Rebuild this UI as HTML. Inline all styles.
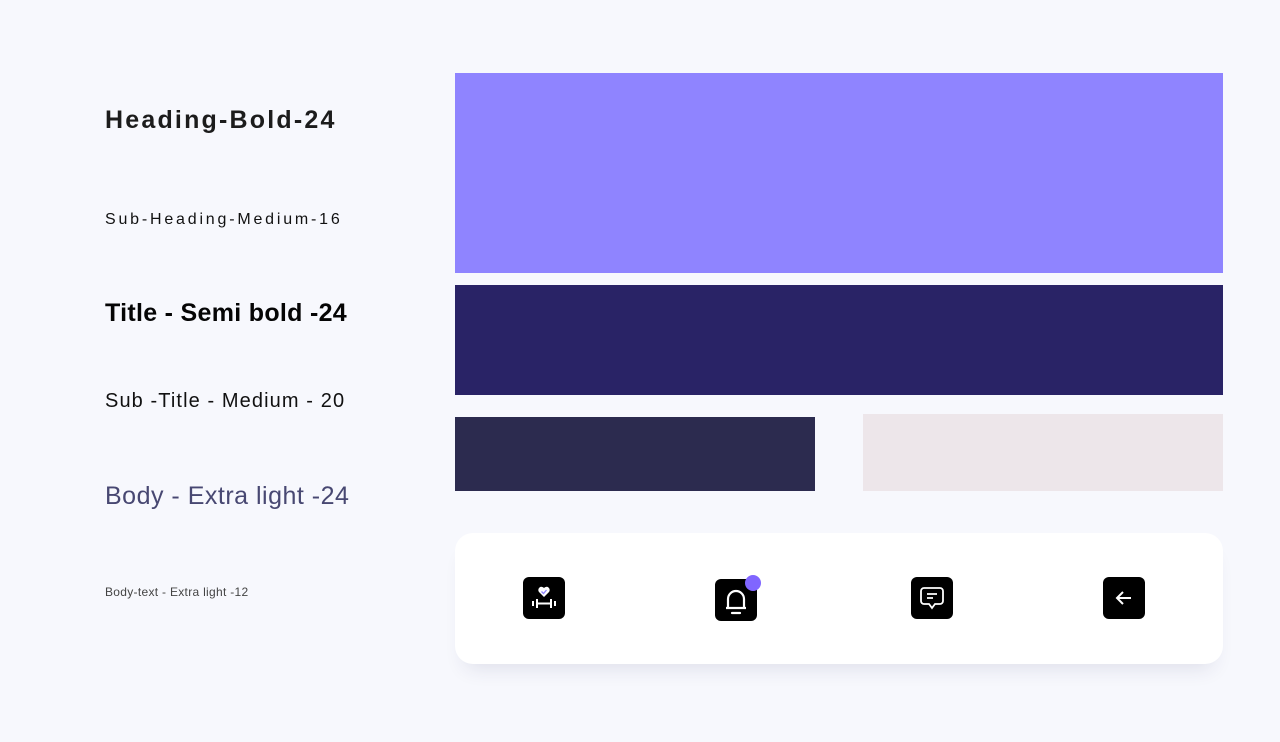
<!DOCTYPE html>
<html><head><style>
body{margin:0;width:1280px;height:742px;background:#f7f8fd;position:relative;overflow:hidden;font-family:"Liberation Sans",sans-serif}
.t{position:absolute;left:105px;white-space:nowrap;line-height:1}
.b{position:absolute}
.ic{position:absolute;width:42px;height:42px;background:#000;border-radius:6px}
.ic svg{position:absolute;left:0;top:0}
</style></head><body>
<div class="t" style="top:108px;font-size:25px;font-weight:bold;color:#1c1c1c;letter-spacing:2.2px">Heading-Bold-24</div>
<div class="t" style="top:212px;font-size:16px;color:#111;letter-spacing:2.8px">Sub-Heading-Medium-16</div>
<div class="t" style="top:301px;font-size:25px;font-weight:bold;color:#050505;letter-spacing:0.3px">Title - Semi bold -24</div>
<div class="t" style="top:391px;font-size:20px;color:#111;letter-spacing:1.1px">Sub -Title - Medium - 20</div>
<div class="t" style="top:484px;font-size:25px;color:#484872;letter-spacing:0.5px;font-weight:300">Body - Extra light -24</div>
<div class="t" style="top:586px;font-size:12px;color:#444;letter-spacing:0.3px">Body-text - Extra light -12</div>

<div class="b" style="left:455px;top:73px;width:768px;height:200px;background:#8f84ff"></div>
<div class="b" style="left:455px;top:285px;width:768px;height:110px;background:#292366"></div>
<div class="b" style="left:455px;top:417px;width:360px;height:74px;background:#2c2b4f"></div>
<div class="b" style="left:863px;top:414px;width:360px;height:77px;background:#ede6ea"></div>

<div class="b" style="left:455px;top:533px;width:768px;height:131px;background:#fff;border-radius:18px;box-shadow:0 14px 20px -10px rgba(40,40,90,0.12)"></div>

<div class="ic" style="left:523px;top:577px"><svg width="42" height="42" viewBox="0 0 42 42" fill="none" stroke="#fff" stroke-width="2">
<path d="M21 20 L16 15 A3 3 0 0 1 21 11 A3 3 0 0 1 26 15 Z" fill="#fff" stroke="none"/>
<path d="M18.5 14.5 L20.5 16.5 L23.5 13" stroke="#8f84ff" stroke-width="1.3"/>
<path d="M10 24v5M14 22v9M28 22v9M32 24v5M14 26.5h14"/></svg></div>

<div class="ic" style="left:715px;top:579px"><svg width="42" height="42" viewBox="0 0 42 42" fill="none" stroke="#fff" stroke-width="2.2">
<path d="M11 29h20M13 29v-9a8 8 0 0 1 16 0v9"/><path d="M17 34h8" stroke-linecap="round"/></svg></div>
<div class="b" style="left:745px;top:575px;width:16px;height:16px;border-radius:50%;background:#8066ff"></div>

<div class="ic" style="left:911px;top:577px"><svg width="42" height="42" viewBox="0 0 42 42" fill="none" stroke="#fff" stroke-width="1.8">
<path d="M13 11h16a3 3 0 0 1 3 3v10a3 3 0 0 1-3 3h-5l-3 4-3-4h-5a3 3 0 0 1-3-3V14a3 3 0 0 1 3-3z"/><path d="M16 17h10M16 21h6"/></svg></div>

<div class="ic" style="left:1103px;top:577px"><svg width="42" height="42" viewBox="0 0 42 42" fill="none" stroke="#fff" stroke-width="2">
<path d="M28 21H14M20 15l-6 6 6 6"/></svg></div>
</body></html>
